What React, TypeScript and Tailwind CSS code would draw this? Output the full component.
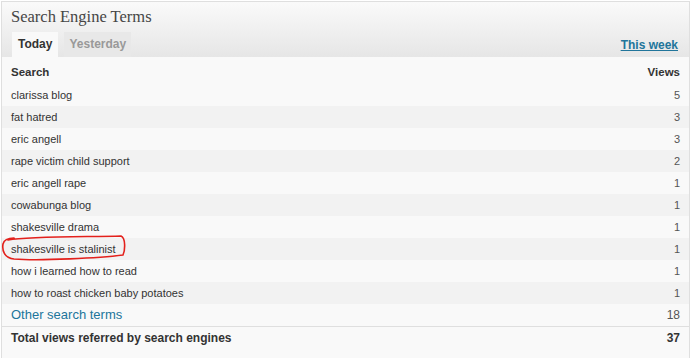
const rows: [string, number][] = [
  ['clarissa blog', 5],
  ['fat hatred', 3],
  ['eric angell', 3],
  ['rape victim child support', 2],
  ['eric angell rape', 1],
  ['cowabunga blog', 1],
  ['shakesville drama', 1],
  ['shakesville is stalinist', 1],
  ['how i learned how to read', 1],
  ['how to roast chicken baby potatoes', 1],
];

export default function App() {
  return (
    <div className="w-[691px] h-[358px] bg-white overflow-hidden font-['Liberation_Sans',Arial,sans-serif] relative">
      <div className="ml-px mt-px w-[689px] h-[357px] border-x border-t border-[#dfdfdf] flex flex-col">
        {/* Header with title and tabs */}
        <div className="h-[55px] bg-gradient-to-b from-[#fafafa] to-[#e6e6e6] flex flex-col">
          <div className="pl-[9px] pt-[5px] h-[30px] leading-[20px] text-[16.5px] text-[#464646] font-['Liberation_Serif',Georgia,serif]">
            Search Engine Terms
          </div>
          <div className="flex items-end justify-between pl-[10px] pr-[11px] h-[25px]">
            <div className="flex gap-[6px] h-full">
              <span className="h-full px-[6px] bg-[#f9f9f9] text-[12px] font-bold text-[#333] leading-[25px]">Today</span>
              <span className="h-full px-[5px] bg-[#e8e8e8] text-[12px] font-bold text-[#999] leading-[25px]">Yesterday</span>
            </div>
            <a className="text-[12px] font-bold text-[#21759b] underline leading-[22px] mb-[1px]">This week</a>
          </div>
        </div>

        {/* Table */}
        <div className="flex-1 bg-[#f9f9f9] pt-[5px] text-[#333]">
          <div className="h-[22px] flex items-center justify-between pl-[9px] pr-[9px] text-[11.5px] font-bold">
            <span>Search</span>
            <span>Views</span>
          </div>
          {rows.map(([term, views], i) => (
            <div
              key={term}
              className={`h-[22px] flex items-center justify-between pl-[9px] pr-[9px] text-[11px] ${i % 2 === 1 ? 'bg-[#f2f2f2]' : 'bg-[#f9f9f9]'}`}
            >
              <span>{term}</span>
              <span className="text-[#555]">{views}</span>
            </div>
          ))}
          <div className="h-[22px] flex items-center justify-between pl-[9px] pr-[9px]">
            <span className="text-[13px] text-[#21759b]">Other search terms</span>
            <span className="text-[12px] text-[#555]">18</span>
          </div>
          <div className="h-[23px] flex items-center justify-between pl-[9px] pr-[9px] border-t border-[#dfdfdf] text-[12px] font-bold">
            <span>Total views referred by search engines</span>
            <span>37</span>
          </div>
        </div>
      </div>

      {/* red hand-drawn circle */}
      <svg className="absolute left-0 top-0 pointer-events-none" width="691" height="358">
        <path
          d="M8 240 C30 236, 90 237, 121 236 C126 238, 125 251, 123 255 C100 258, 40 261, 14 259 C4 258, 2 250, 3 244 C4 240, 8 238, 14 238"
          fill="none"
          stroke="#e3211c"
          strokeWidth="1.6"
          strokeLinecap="round"
        />
      </svg>
    </div>
  );
}
